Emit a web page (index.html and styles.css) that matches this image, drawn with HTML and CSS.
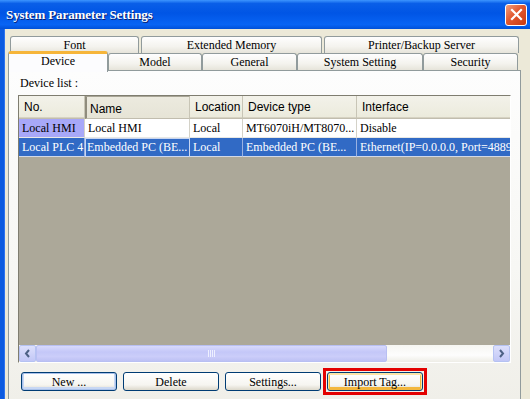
FILE: index.html
```html
<!DOCTYPE html>
<html lang="en">

<head>
  <meta charset="UTF-8">
  <meta name="viewport" content="width=device-width, initial-scale=1.0">
  <title>System Parameter Settings</title>
  <link rel="stylesheet" href="styles.css">
</head>

<body>
  <div class="window">
    <!-- Title bar -->
    <div class="titlebar">
      <span class="title">System Parameter Settings</span>
      <span class="close">
        <svg width="13" height="13" viewBox="0 0 13 13">
          <path d="M2 2 L11 11 M11 2 L2 11" stroke="#fff" stroke-width="2.2" stroke-linecap="square" />
        </svg>
      </span>
    </div>

    <div class="frame">
      <!-- Tabs -->
      <div class="tabs back">
        <div class="tab w-font">Font</div>
        <div class="tab w-ext">Extended Memory</div>
        <div class="tab w-printer">Printer/Backup Server</div>
      </div>
      <div class="tabs front">
        <div class="tab active w-device">Device</div>
        <div class="tab w-model">Model</div>
        <div class="tab w-general">General</div>
        <div class="tab w-system">System Setting</div>
        <div class="tab w-security">Security</div>
      </div>

      <!-- Tab page -->
      <div class="page">
        <div class="label">Device list :</div>

        <div class="listview">
          <div class="row head">
            <div class="cell">No.</div>
            <div class="cell pressed">Name</div>
            <div class="cell">Location</div>
            <div class="cell">Device type</div>
            <div class="cell">Interface</div>
          </div>
          <div class="row">
            <div class="cell marked">Local HMI</div>
            <div class="cell">Local HMI</div>
            <div class="cell">Local</div>
            <div class="cell">MT6070iH/MT8070...</div>
            <div class="cell">Disable</div>
          </div>
          <div class="row selected">
            <div class="cell">Local PLC 4</div>
            <div class="cell focus">Embedded PC (BE...</div>
            <div class="cell">Local</div>
            <div class="cell">Embedded PC (BE...</div>
            <div class="cell">Ethernet(IP=0.0.0.0, Port=48898)</div>
          </div>
          <div class="empty"></div>

          <div class="hscroll">
            <div class="arrow">
              <svg width="9" height="9" viewBox="0 0 9 9"><path d="M6 1 L3 4.5 L6 8" fill="none" stroke="#4d6185" stroke-width="2" /></svg>
            </div>
            <div class="track">
              <div class="thumb"><span class="grip"></span></div>
            </div>
            <div class="arrow">
              <svg width="9" height="9" viewBox="0 0 9 9"><path d="M3 1 L6 4.5 L3 8" fill="none" stroke="#4d6185" stroke-width="2" /></svg>
            </div>
          </div>
        </div>

        <div class="buttons">
          <button class="btn default">New ...</button>
          <button class="btn">Delete</button>
          <button class="btn">Settings...</button>
          <span class="red-mark"><button class="btn hot">Import Tag...</button></span>
        </div>
      </div>
    </div>
  </div>
</body>

</html>
```

FILE: styles.css
```css
body {
  margin: 0;
  width: 530px;
  height: 399px;
  overflow: hidden;
  font-family: 'Liberation Serif', serif;
  font-size: 12px;
  color: #000;
}

.window {
  height: 399px;
  display: flex;
  flex-direction: column;
  background: #ece9d8;
}

/* Title bar */
.titlebar {
  height: 29px;
  display: flex;
  align-items: center;
  justify-content: space-between;
  padding: 0 3px 0 6px;
  background: linear-gradient(#3d95ff, #0a5fe8 12%, #0055e5 45%, #0864f4 85%, #0050d8 100%);
  flex-shrink: 0;
}

.title {
  color: #fff;
  font-weight: bold;
  font-size: 13px;
  letter-spacing: -0.1px;
  text-shadow: 1px 1px 0 #0a1f6e;
  padding-top: 1px;
}

.close {
  width: 20px;
  height: 20px;
  border: 1px solid #fff;
  border-radius: 3px;
  background: linear-gradient(135deg, #f0a080, #e2582f 45%, #c93a12);
  display: flex;
  align-items: center;
  justify-content: center;
}

.frame {
  flex: 1;
  border-left: 4px solid #0b5ae0;
  box-shadow: inset 1px 0 0 #2d73f0;
  padding: 7px 0 0 4px;
  display: flex;
  flex-direction: column;
}

/* Tabs */
.tabs {
  display: flex;
  height: 17px;
}

.tabs.back {
  margin-left: 2px;
  gap: 2px;
}

.tabs.front {
  position: relative;
  z-index: 2;
}

.tab {
  box-sizing: border-box;
  height: 17px;
  border: 1px solid #919b9c;
  border-bottom: none;
  border-radius: 3px 3px 0 0;
  background: linear-gradient(#fefefe, #f4f3ee 60%, #e6e4da);
  text-align: center;
  line-height: 17px;
}

.tab.active {
  height: 21px;
  margin-top: -2px;
  background: #fcfcfe;
  border-top: 3px solid #f6b53a;
  line-height: 15px;
}

.w-font { width: 129px; }
.w-ext { width: 181px; }
.w-printer { width: 195px; }
.w-device { width: 100px; }
.w-model { width: 94px; }
.w-general { width: 95px; }
.w-system { width: 126px; }
.w-security { width: 95px; }

/* Tab page */
.page {
  flex: 1;
  width: 513px;
  box-sizing: border-box;
  border: 1px solid #919b9c;
  border-bottom: none;
  background: linear-gradient(#fdfdfd, #f7f7f4 60%, #f0efe9);
  padding: 4px 0 0 9px;
}

.label {
  margin-left: 2px;
  line-height: 16px;
  margin-bottom: 4px;
}

.listview {
  width: 493px;
  height: 268px;
  box-sizing: border-box;
  border: 1px solid;
  border-color: #7f7d70 #fff #fff #7f7d70;
  display: flex;
  flex-direction: column;
  overflow: hidden;
  background: #aca899;
}

.row {
  display: grid;
  grid-template-columns: 66px 105px 53px 114px 170px;
  height: 19px;
  flex-shrink: 0;
  background: #fff;
}

.cell {
  box-sizing: border-box;
  border-right: 1px solid #d4d2c8;
  border-bottom: 1px solid #e8e8e4;
  padding-left: 3px;
  line-height: 18px;
  white-space: nowrap;
  overflow: hidden;
}

.row.head {
  height: 23px;
  background: linear-gradient(#f3f2ea, #ebeadb);
  box-shadow: inset 0 -2px 0 #d6d2c2;
}

.row.head .cell {
  font-family: 'Liberation Sans', sans-serif;
  font-size: 12px;
  line-height: 22px;
  padding-left: 5px;
  border-right: 1px solid #c8c5b6;
  border-bottom: 1px solid #c1bdae;
}

.row.head .pressed {
  background: linear-gradient(#eceadf, #e6e4d6);
  border-left: 2px solid #8f8c7d;
  border-top: 1px solid #a8a596;
  line-height: 24px;
  padding-left: 3px;
}

.cell.marked {
  background: #a8a8f8;
}

.row.selected {
  background: #316ac5;
  color: #fff;
}

.row.selected .cell {
  border-right-color: #9ab2e2;
  border-bottom-color: #d0d8e8;
}

.row.selected .focus {
  padding-left: 2px;
  outline: 1px solid #c8d6f2;
  outline-offset: -1px;
}

.empty {
  flex: 1;
}

/* Horizontal scrollbar */
.hscroll {
  height: 17px;
  display: flex;
  flex-shrink: 0;
  background: linear-gradient(#f6f6f2, #fdfdfd 60%, #eeede6);
}

.arrow {
  box-sizing: border-box;
  width: 17px;
  height: 17px;
  border: 1px solid #b5c2f2;
  border-radius: 2px;
  background: linear-gradient(#dde0fc, #c2c7f6);
  display: flex;
  align-items: center;
  justify-content: center;
}

.track {
  flex: 1;
  display: flex;
}

.thumb {
  width: 351px;
  box-sizing: border-box;
  border: 1px solid #b8bff2;
  border-radius: 2px;
  background: linear-gradient(#d8dafc, #c4c7f8 40%, #cbcdf9 70%, #bdc1f4);
  display: flex;
  align-items: center;
  justify-content: center;
}

.grip {
  width: 7px;
  height: 7px;
  background: repeating-linear-gradient(90deg, #eef0ff 0 1px, transparent 1px 2px);
}

/* Buttons */
.buttons {
  display: flex;
  gap: 6px;
  margin: 9px 0 0 3px;
}

.btn {
  width: 96px;
  height: 19px;
  padding: 0;
  font-family: 'Liberation Serif', serif;
  font-size: 12px;
  color: #000;
  border: 1px solid #003c74;
  border-radius: 3px;
  background: linear-gradient(#ffffff, #f6f5f0 70%, #dcd8cb);
  line-height: 16px;
}

.btn.default {
  box-shadow: inset 0 0 0 1px #a9c1ea, inset 0 -1px 0 2px #c8d7f3;
}

.btn.hot {
  display: block;
  box-shadow: inset 0 1px 0 1px #fde4a6, inset 0 -1px 0 2px #f3b73e;
}

/* red annotation box round the Import Tag button */
.red-mark {
  margin: -4px;
  padding: 1px;
  border: 3px solid #e30000;
}
```
